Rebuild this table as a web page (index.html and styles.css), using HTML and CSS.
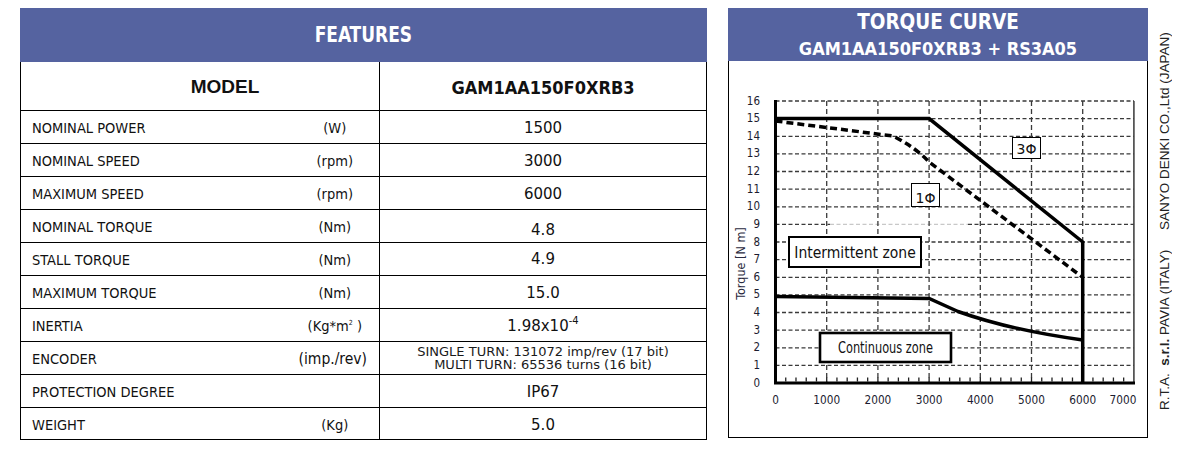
FILE: index.html
```html
<!DOCTYPE html>
<html lang="en">
<head>
<meta charset="utf-8">
<title>GAM1AA150F0XRB3 features</title>
<link rel="stylesheet" href="styles.css">
</head>
<body>
<div class="page">
  <section class="features">
    <div class="features-hd"><span>FEATURES</span></div>
    <table class="spec">
      <colgroup><col class="c-label"><col class="c-unit"><col class="c-val"></colgroup>
      <tr class="model-row"><th colspan="2" class="model">MODEL</th><th class="model-val">GAM1AA150F0XRB3</th></tr>
      <tr><td class="lbl">NOMINAL POWER</td><td class="unit">(W)</td><td class="val">1500</td></tr>
      <tr><td class="lbl">NOMINAL SPEED</td><td class="unit">(rpm)</td><td class="val">3000</td></tr>
      <tr><td class="lbl">MAXIMUM SPEED</td><td class="unit">(rpm)</td><td class="val">6000</td></tr>
      <tr><td class="lbl">NOMINAL TORQUE</td><td class="unit">(Nm)</td><td class="val val-low">4.8</td></tr>
      <tr><td class="lbl">STALL TORQUE</td><td class="unit">(Nm)</td><td class="val val-high">4.9</td></tr>
      <tr><td class="lbl">MAXIMUM TORQUE</td><td class="unit">(Nm)</td><td class="val">15.0</td></tr>
      <tr><td class="lbl">INERTIA</td><td class="unit">(Kg*m<sup class="sq">2</sup> )</td><td class="val">1.98x10<sup class="exp">-4</sup></td></tr>
      <tr><td class="lbl">ENCODER</td><td class="unit unit-wide">(imp./rev)</td><td class="val enc">SINGLE TURN: 131072 imp/rev (17 bit)<br>MULTI TURN: 65536 turns (16 bit)</td></tr>
      <tr><td class="lbl">PROTECTION DEGREE</td><td class="unit"></td><td class="val">IP67</td></tr>
      <tr class="last-row"><td class="lbl">WEIGHT</td><td class="unit">(Kg)</td><td class="val">5.0</td></tr>
    </table>
  </section>

  <section class="torque">
    <div class="torque-hd">
      <div class="t1">TORQUE CURVE</div>
      <div class="t2">GAM1AA150F0XRB3 + RS3A05</div>
    </div>
    <div class="chart-box">
      <svg class="chart" width="418" height="376" viewBox="729 61 418 376" xmlns="http://www.w3.org/2000/svg">
        <!-- horizontal grid -->
        <path class="grid-h" d="M775.5 365.4H1134M775.5 347.8H1134M775.5 330.1H1134M775.5 312.5H1134M775.5 294.9H1134M775.5 277.3H1134M775.5 259.6H1134M775.5 242H1134M775.5 206.8H1134M775.5 189.1H1134M775.5 171.5H1134M775.5 153.9H1134M775.5 136.3H1134M775.5 118.6H1134M775.5 101H1134M775.5 224.4H830M968 224.4H1134"/>
        <path class="grid-h grid-light" d="M830 224.4H968"/>
        <!-- vertical grid -->
        <path class="grid-v" d="M826.7 101V383M877.9 101V383M929.1 101V383M980.3 101V383M1031.5 101V383M1082.7 101V383"/>
        <path class="frame-r" d="M1133.9 101V383"/>
        <line class="ticks" x1="785.1" y1="379.5" x2="1133" y2="379.5"/>
        <path class="axis" d="M775.5 100V384.5M774 383H1135"/>

        <!-- curves -->
        <path class="curve" d="M775.5 118.6H929.1L1082.7 242V383"/>
        <path class="curve dashed" d="M775.5 121L893 136Q915 147 929.1 162L1082.7 277.3"/>
        <path class="curve" d="M775.5 296.6L929.1 298.4L958 311.5Q1010 330 1082.7 340"/>

        <!-- labels -->
        <rect class="tag" x="1012.5" y="137.5" width="28" height="21"/>
        <text class="tag-t" x="1026.5" y="153.5">3Φ</text>
        <rect class="tag" x="911.5" y="183.5" width="28" height="23"/>
        <text class="tag-t" x="925.5" y="203">1Φ</text>
        <rect class="zone" x="789" y="237" width="132" height="30"/>
        <text class="zone-t" x="855" y="257.5">Intermittent zone</text>
        <rect class="zone zone-thick" x="820" y="333" width="131" height="29"/>
        <text class="zone-t zone-narrow" x="885.5" y="353" textLength="95" lengthAdjust="spacingAndGlyphs">Continuous zone</text>

        <!-- y axis -->
        <g class="ylab">
          <text x="760" y="104.5">16</text>
          <text x="760" y="122.2">15</text>
          <text x="760" y="139.8">14</text>
          <text x="760" y="157.4">13</text>
          <text x="760" y="175">12</text>
          <text x="760" y="192.7">11</text>
          <text x="760" y="210.3">10</text>
          <text x="760" y="227.9">9</text>
          <text x="760" y="245.5">8</text>
          <text x="760" y="263.2">7</text>
          <text x="760" y="280.8">6</text>
          <text x="760" y="298.4">5</text>
          <text x="760" y="316">4</text>
          <text x="760" y="333.7">3</text>
          <text x="760" y="351.3">2</text>
          <text x="760" y="368.9">1</text>
          <text x="760" y="386.5">0</text>
        </g>
        <text class="ytitle" transform="translate(745 263.5) rotate(-90)">Torque [N m]</text>

        <!-- x axis -->
        <g class="xlab">
          <text x="775.5" y="404">0</text>
          <text x="826.7" y="404">1000</text>
          <text x="877.9" y="404">2000</text>
          <text x="929.1" y="404">3000</text>
          <text x="980.3" y="404">4000</text>
          <text x="1031.5" y="404">5000</text>
          <text x="1082.7" y="404">6000</text>
          <text x="1123" y="404">7000</text>
        </g>
      </svg>
    </div>
  </section>

  <aside class="side">
    <span>R.T.A.&nbsp; <b class="srl">s.r.l.</b> PAVIA (ITALY)</span>
    <span>SANYO DENKI CO.,Ltd (JAPAN)</span>
  </aside>
</div>
</body>
</html>
```

FILE: styles.css
```css
html, body {
  margin: 0;
  padding: 0;
  background: #ffffff;
}

.page {
  display: flex;
  align-items: flex-start;
  padding: 8px 0 0 20px;
  color: #111111;
}

/* ---------- FEATURES TABLE ---------- */
.features {
  width: 687px;
  flex: none;
}

.features-hd {
  height: 54px;
  background: #5563a0;
  color: #ffffff;
  text-align: center;
  font-family: "DejaVu Sans Condensed", "DejaVu Sans", sans-serif;
  font-weight: bold;
  font-size: 21.5px;
  line-height: 54px;
}

.features-hd span {
  display: inline-block;
  transform: scaleX(0.88);
}

.spec {
  width: 687px;
  border-collapse: collapse;
  table-layout: fixed;
  border: 1px solid #000000;
  border-top: none;
}

.c-label { width: 270px; }
.c-unit { width: 89px; }

.spec td,
.spec th {
  padding: 3px 0 0;
  border-bottom: 1px solid #000000;
  vertical-align: middle;
  white-space: nowrap;
}

.spec tr { height: 33px; }
.spec tr.model-row { height: 48px; }
.spec tr.last-row { height: 32px; }

.model {
  font-family: "Liberation Sans", Arial, sans-serif;
  font-weight: bold;
  font-size: 19px;
  text-align: center;
  padding-left: 50px !important;
}

.model-val {
  border-left: 1px solid #000000;
  text-align: center;
  font-family: "DejaVu Sans Condensed", "DejaVu Sans", sans-serif;
  font-weight: bold;
  font-size: 18px;
}

.lbl {
  padding-left: 11px !important;
  font-family: "DejaVu Sans Condensed", "DejaVu Sans", sans-serif;
  font-size: 14.5px;
}

.unit {
  text-align: center;
  font-family: "DejaVu Sans Condensed", "DejaVu Sans", sans-serif;
  font-size: 14.5px;
}

.unit-wide {
  font-size: 15.5px;
  padding-right: 4px !important;
}

.unit .sq {
  font-size: 7px;
  vertical-align: 6px;
  line-height: 0;
}

.val {
  border-left: 1px solid #000000;
  text-align: center;
  font-family: "DejaVu Sans", sans-serif;
  font-size: 15px;
}

.val-low { padding-top: 9px !important; }
.val-high { padding-top: 0 !important; }

.val .exp {
  font-size: 10px;
  vertical-align: 7px;
  line-height: 0;
  margin-left: 0;
}

.val.enc {
  font-size: 13px;
  line-height: 13px;
  padding-top: 1px;
  color: #1a1a1a;
}

/* ---------- TORQUE CURVE ---------- */
.torque {
  width: 420px;
  margin-left: 21px;
  flex: none;
}

.torque-hd {
  height: 53px;
  box-sizing: border-box;
  padding-top: 2px;
  background: #5563a0;
  color: #ffffff;
  text-align: center;
  font-family: "DejaVu Sans Condensed", "DejaVu Sans", sans-serif;
  font-weight: bold;
}

.t1 {
  font-size: 20.5px;
  line-height: 24px;
}

.t2 {
  font-size: 18px;
  line-height: 22px;
  margin-top: 4px;
}

.chart-box {
  height: 377px;
  box-sizing: border-box;
  border: 1px solid #000000;
  border-top: none;
}

.chart {
  display: block;
}

.grid-h {
  fill: none;
  stroke: #3a3a3a;
  stroke-width: 1.3;
  stroke-dasharray: 4 2.5;
}

.grid-light {
  stroke: #c8c8c8;
}

.grid-v {
  fill: none;
  stroke: #3a3a3a;
  stroke-width: 1.3;
  stroke-dasharray: 5 3;
}

.frame-r {
  stroke: #444444;
  stroke-width: 1.6;
}

.ticks {
  stroke: #222222;
  stroke-width: 4;
  stroke-dasharray: 1.3 8.94;
}

.axis {
  fill: none;
  stroke: #000000;
  stroke-width: 3;
}

.curve {
  fill: none;
  stroke: #000000;
  stroke-width: 3.5;
  stroke-linejoin: miter;
}

.curve.dashed {
  stroke-dasharray: 7 4;
}

.tag {
  fill: #ffffff;
  stroke: #000000;
  stroke-width: 1;
}

.tag-t {
  font-family: "DejaVu Sans", sans-serif;
  font-size: 14px;
  text-anchor: middle;
  fill: #111111;
}

.zone {
  fill: #ffffff;
  stroke: #000000;
  stroke-width: 2;
}

.zone-thick {
  stroke-width: 2.6;
}

.zone-t {
  font-family: "DejaVu Sans Condensed", "DejaVu Sans", sans-serif;
  font-size: 15.5px;
  text-anchor: middle;
  fill: #111111;
}

.zone-narrow {
  font-size: 15.5px;
}

.ylab text {
  font-family: "DejaVu Sans Condensed", "DejaVu Sans", sans-serif;
  font-size: 11.5px;
  text-anchor: end;
  fill: #1c1c30;
}

.xlab text {
  font-family: "DejaVu Sans Condensed", "DejaVu Sans", sans-serif;
  font-size: 11.7px;
  text-anchor: middle;
  fill: #1c1c30;
}

.ytitle {
  font-family: "DejaVu Sans Condensed", "DejaVu Sans", sans-serif;
  font-size: 12.5px;
  text-anchor: middle;
  fill: #2a2a40;
}

/* ---------- SIDE CAPTION ---------- */
.side {
  flex: none;
  width: 34px;
  height: 377px;
  margin-top: 25px;
  display: flex;
  gap: 20px;
  writing-mode: vertical-rl;
  transform: rotate(180deg);
  font-family: "Liberation Sans", Arial, sans-serif;
  font-size: 13.5px;
  line-height: 34px;
  color: #222222;
  white-space: nowrap;
}

.side .srl {
  font-weight: bold;
}
```
